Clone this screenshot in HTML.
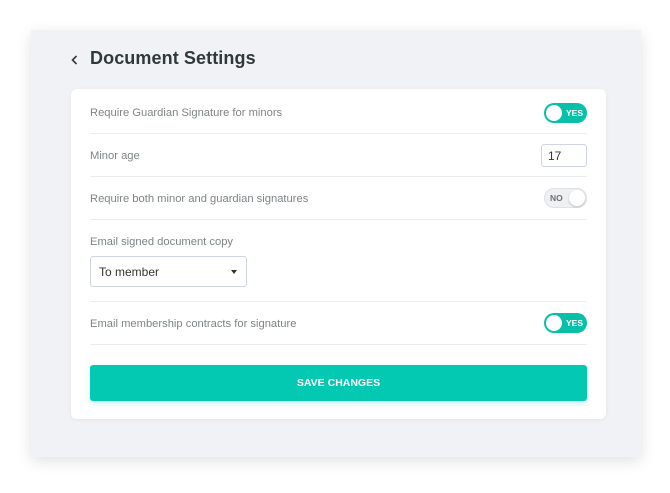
<!DOCTYPE html>
<html><head><style>
body{margin:0;width:670px;height:493px;background:#fff;font-family:"Liberation Sans",Arial,sans-serif;position:relative;overflow:hidden}
.panel{position:absolute;left:31px;top:30px;width:610px;height:427px;background:#f1f2f6;box-shadow:0 4px 14px rgba(0,0,0,.12)}
.title{position:absolute;left:90px;top:48px;font-size:18px;font-weight:bold;color:#2f3a3a;letter-spacing:.1px}
.back{position:absolute;left:70px;top:54px}
.card{position:absolute;left:71px;top:89px;width:535px;height:330px;background:#fff;border-radius:6px;box-shadow:0 1px 4px rgba(0,0,0,.06)}
.lbl{position:absolute;left:90px;font-size:11.2px;color:#7e8486}
.hr{position:absolute;left:90px;width:497px;height:1px;background:#ebedef}
.tog{position:absolute;left:544px;width:43px;height:20px;border-radius:11px;box-sizing:border-box}
.on{background:#08bfa8}
.on::before{content:"";position:absolute;left:2px;top:2px;width:16px;height:16px;border-radius:50%;background:#fff}
.on span{position:absolute;right:4px;top:5px;font-size:8.5px;font-weight:bold;color:#fff}
.off{background:#eef0f2;border:1px solid #dde0e4}
.off::after{content:"";position:absolute;right:1px;top:1px;width:16px;height:16px;border-radius:50%;background:#fff;box-shadow:0 1px 2px rgba(0,0,0,.2)}
.off span{position:absolute;left:5px;top:4px;font-size:8.5px;font-weight:bold;color:#6b7072}
.inp{position:absolute;left:541px;top:144px;width:46px;height:23px;border:1px solid #cfd3e2;border-radius:3px;box-sizing:border-box;font-size:12px;color:#333;padding:4px 0 0 6px}
.sel{position:absolute;left:90px;top:256px;width:157px;height:31px;border:1px solid #cfd3e2;border-radius:3px;box-sizing:border-box;font-size:12px;color:#333;padding:8px 0 0 8px}
.sel::after{content:"";position:absolute;right:9px;top:13px;border-left:3px solid transparent;border-right:3px solid transparent;border-top:4px solid #333}
.btn{position:absolute;left:90px;top:365px;width:497px;height:36px;background:#03c8b2;border-radius:3px;color:#fff;font-weight:bold;font-size:10.5px;text-align:center;line-height:36px;box-shadow:0 3px 6px rgba(3,200,178,.2)}
</style></head><body>
<div class="panel"></div>
<svg class="back" width="10" height="12" viewBox="0 0 10 12"><path d="M6.5 2 L2.5 6 L6.5 10" stroke="#2f3a3a" stroke-width="1.6" fill="none"/></svg>
<div class="title">Document Settings</div>
<div class="card"></div>
<div class="lbl" style="top:107px">Require Guardian Signature for minors</div>
<div class="tog on" style="top:103px"><span>YES</span></div>
<div class="hr" style="top:133px"></div>
<div class="lbl" style="top:150px">Minor age</div>
<div class="inp">17</div>
<div class="hr" style="top:176px"></div>
<div class="lbl" style="top:193px">Require both minor and guardian signatures</div>
<div class="tog off" style="top:188px"><span>NO</span></div>
<div class="hr" style="top:219px"></div>
<div class="lbl" style="top:236px">Email signed document copy</div>
<div class="sel">To member</div>
<div class="hr" style="top:301px"></div>
<div class="lbl" style="top:318px">Email membership contracts for signature</div>
<div class="tog on" style="top:313px"><span>YES</span></div>
<div class="hr" style="top:344px"></div>
<div class="btn">SAVE CHANGES</div>
</body></html>
